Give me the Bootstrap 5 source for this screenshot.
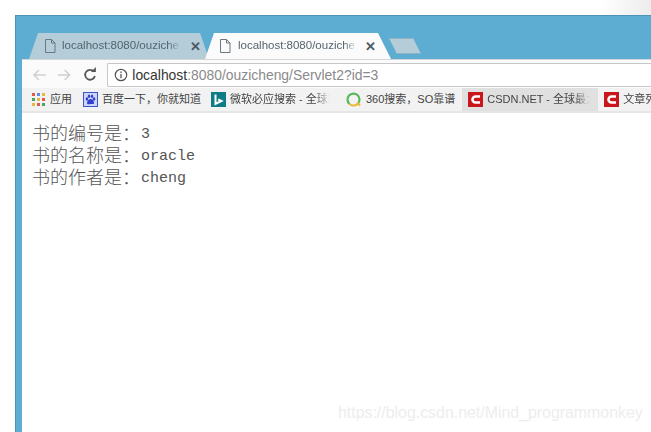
<!DOCTYPE html>
<html lang="zh">
<head>
<meta charset="utf-8">
<title>Servlet2</title>
<link href="https://cdn.jsdelivr.net/npm/bootstrap@5.3.0/dist/css/bootstrap.min.css" rel="stylesheet">
<style>
html,body{height:432px;overflow:hidden;background:#fff}
body{font-family:"Liberation Sans","Noto Sans CJK SC",sans-serif}
.shot{height:432px;padding:15px 0 0 15px;filter:blur(.5px);background:linear-gradient(90deg,#fff 600px,#ececec 651px)}
.win{height:417px;background:#5dacd1;border-top:1px solid #4b94b8;border-left:1px solid #4b94b8;padding-left:6px}
.strip{height:43px;padding-top:17px;padding-left:7px}
.tb{height:26px;width:180px;flex:none;font-size:11.5px;color:#55646e;clip-path:polygon(0 100%,9px 0,171px 0,180px 100%)}
.tb1{background:#b4cdd9;padding-left:15px}
.tb2{background:#fbfbfb;margin-left:-4px;width:186px;padding-left:14px;clip-path:polygon(0 100%,9px 0,173px 0,186px 100%)}
.tb svg{flex:none;margin-right:6px}
.tb2 svg{margin-right:7px}
.ttl{width:120px;white-space:nowrap;overflow:hidden;-webkit-mask-image:linear-gradient(90deg,#000 88%,transparent);mask-image:linear-gradient(90deg,#000 88%,transparent)}
.cls{font-size:13px;line-height:1;margin-left:7px;color:#4c5a63;font-weight:700}
.tb1 .cls{margin-left:8px}
.plus{width:32px;height:16px;margin-left:-2px;margin-top:5px;background:#b4cdd9;border:1px solid #8fb3c6;clip-path:polygon(0 0,24px 0,100% 100%,8px 100%)}
.tool{height:29px;width:640px;background:#fbfbfb;border-top:1px solid #d4d6d8;padding-left:9px;padding-top:2px}
.omni{height:24px;width:560px;margin-left:5px;background:#fff;border:1px solid #c5c7c9;border-right:0;border-radius:2px 0 0 2px;padding-left:6px;font-size:13.9px;color:#8a8a8a;white-space:nowrap}
.omni b{font-weight:400;color:#333}
.marks{height:25px;width:640px;background:#f2f2f2;border-bottom:2px solid #e6e6e6;font-size:11px;color:#444;white-space:nowrap;padding-left:5px;overflow:hidden}
.mk{flex:none;height:23px;padding:0 5px}
.mk svg{flex:none;margin-right:4px}
.mk-apps svg,.mk-q svg{margin-right:5px}
.mk-baidu{margin-left:1px}
.mk-q{margin-left:6px}
.mk-on{background:#e0e0e0;margin-left:2px;padding:0 8px 0 6px}
.mk-last{padding-left:6px}
.fadeout{display:block;overflow:hidden;-webkit-mask-image:linear-gradient(90deg,#000 85%,transparent);mask-image:linear-gradient(90deg,#000 85%,transparent)}
.w-bing{width:100px}
.w-csdn{width:103px}
.pg{width:640px;height:319px;background:#fff;padding:8px 0 0 10px;position:relative}
.ln{font-size:18px;line-height:22px;height:22px;font-family:"Noto Sans CJK SC",serif;font-weight:300;color:#555;white-space:nowrap}
.ln code{font-family:"Liberation Mono",monospace;font-size:15px;color:#555;padding:0;margin-left:1px;vertical-align:2px}
.wm{position:absolute;left:316px;top:288px;font-size:15.9px;color:#ededed;white-space:nowrap}
</style>
</head>
<body>
<div class="shot">
<div class="win">
  <div class="strip d-flex align-items-start">
    <div class="tb tb1 d-flex align-items-center">
      <svg width="12" height="14" viewBox="0 0 12 14" fill="none" stroke="#6b7880"><path d="M1.5.5h6l3.500 3.500v9.500h-9.500zM7.500.5v3.500h3.500"/></svg>
      <span class="ttl">localhost:8080/ouziche</span><span class="cls">✕</span>
    </div>
    <div class="tb tb2 d-flex align-items-center">
      <svg width="12" height="14" viewBox="0 0 12 14" fill="none" stroke="#6b7880"><path d="M1.5.5h6l3.500 3.500v9.500h-9.500zM7.500.5v3.500h3.500"/></svg>
      <span class="ttl">localhost:8080/ouziche</span><span class="cls">✕</span>
    </div>
    <div class="plus"></div>
  </div>
  <div class="tool d-flex align-items-center">
    <svg width="72" height="18" viewBox="0 0 72 18" fill="none" class="flex-none"><path d="M15 9H3M8 4 3 9l5 5" stroke="#d0d0d0" stroke-width="1.600"/><path d="M27 9h12M34 4l5 5-5 5" stroke="#d0d0d0" stroke-width="1.600"/><path d="M63.500 5.600A5 5 0 1 0 64.500 10" stroke="#555" stroke-width="1.800"/><path d="M60.500 6h5V1z" fill="#555"/></svg>
    <div class="omni d-flex align-items-center">
      <svg width="14" height="14" viewBox="0 0 14 14" fill="none" class="me-1"><circle cx="7" cy="7" r="5.700" stroke="#555" stroke-width="1.200"/><path d="M7 6v4.200M7 3.500v1.400" stroke="#555" stroke-width="1.300"/></svg>
      <span><b>localhost</b>:8080/ouzicheng/Servlet2?id=3</span>
    </div>
  </div>
  <div class="marks d-flex align-items-center">
    <div class="mk mk-apps d-flex align-items-center">
      <svg width="13" height="13" viewBox="0 0 13 13"><g><rect width="3" height="3" fill="#e05a47"/><rect x="5" width="3" height="3" fill="#5b8def"/><rect x="10" width="3" height="3" fill="#e8b63c"/><rect y="5" width="3" height="3" fill="#4aa564"/><rect x="5" y="5" width="3" height="3" fill="#e8b63c"/><rect x="10" y="5" width="3" height="3" fill="#e05a47"/><rect y="10" width="3" height="3" fill="#e8b63c"/><rect x="5" y="10" width="3" height="3" fill="#e05a47"/><rect x="10" y="10" width="3" height="3" fill="#4aa564"/></g></svg>
      <span>应用</span>
    </div>
    <div class="mk mk-baidu d-flex align-items-center">
      <svg width="15" height="15" viewBox="0 0 15 15"><rect width="15" height="15" fill="#cfd6f5"/><rect x=".5" y=".5" width="14" height="14" fill="none" stroke="#3a55d0"/><g fill="#2f3fd0"><ellipse cx="4" cy="7" rx="1.300" ry="1.800"/><ellipse cx="6" cy="4.300" rx="1.200" ry="1.700"/><ellipse cx="9" cy="4.300" rx="1.200" ry="1.700"/><ellipse cx="11" cy="7" rx="1.300" ry="1.800"/><path d="M7.500 7c-2 0-3.500 2.500-3.500 4s1.500 1.500 3.500 1 3.500 1 3.500-1-1.500-4-3.500-4z"/></g></svg>
      <span>百度一下，你就知道</span>
    </div>
    <div class="mk d-flex align-items-center">
      <svg width="15" height="15" viewBox="0 0 15 15"><rect width="15" height="15" fill="#0f7c86"/><path d="M4.500 2.500v9.500l6-3-3.300-1.500" fill="none" stroke="#fff" stroke-width="2"/></svg>
      <span class="fadeout w-bing">微软必应搜索 - 全球搜</span>
    </div>
    <div class="mk mk-q d-flex align-items-center">
      <svg width="15" height="15" viewBox="0 0 15 15" fill="none"><path d="M12 11.500A6 6 0 1 0 3.500 12" stroke="#5cb85c" stroke-width="2.200"/><path d="M3.500 12A6 6 0 0 0 12 11.500l2 2" stroke="#eab93a" stroke-width="2.200"/></svg>
      <span>360搜索，SO靠谱</span>
    </div>
    <div class="mk mk-on d-flex align-items-center">
      <svg width="15" height="15" viewBox="0 0 15 15" fill="none"><rect width="15" height="15" fill="#c9161d"/><path d="M12 4.500H7.500a3 3 0 0 0 0 6H12" stroke="#fff" stroke-width="2.600"/></svg>
      <span class="fadeout w-csdn">CSDN.NET - 全球最大</span>
    </div>
    <div class="mk mk-last d-flex align-items-center">
      <svg width="15" height="15" viewBox="0 0 15 15" fill="none"><rect width="15" height="15" fill="#c9161d"/><path d="M12 4.500H7.500a3 3 0 0 0 0 6H12" stroke="#fff" stroke-width="2.600"/></svg>
      <span>文章列表</span>
    </div>
  </div>
  <div class="pg">
    <div class="ln">书的编号是：<code>3</code></div>
    <div class="ln">书的名称是：<code>oracle</code></div>
    <div class="ln">书的作者是：<code>cheng</code></div>
    <div class="wm">https://blog.csdn.net/Mind_programmonkey</div>
  </div>
</div>
</div>
</body>
</html>
